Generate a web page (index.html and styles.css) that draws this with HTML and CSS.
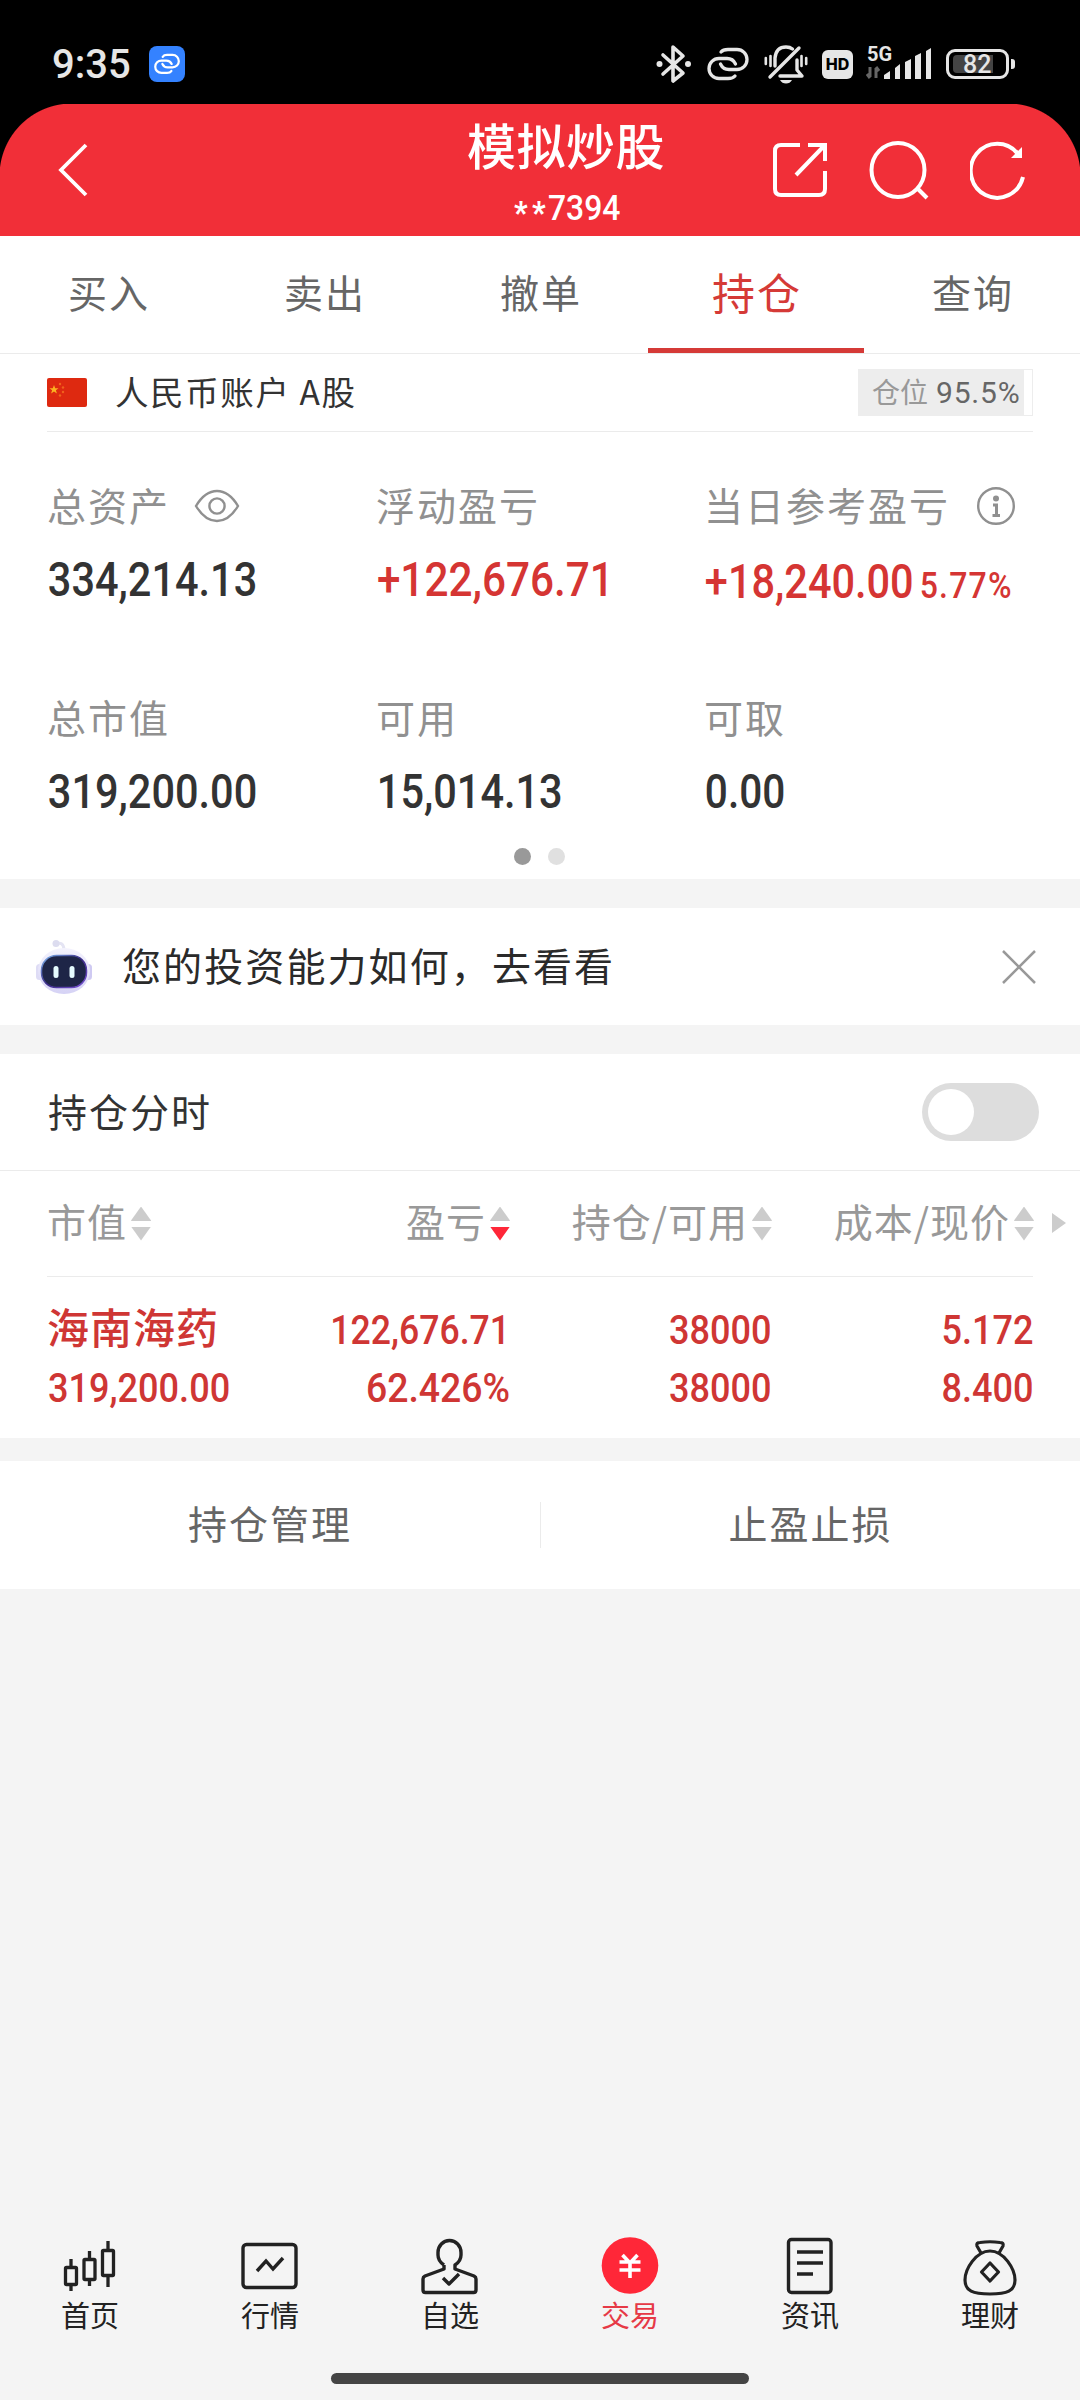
FILE: index.html
```html
<!DOCTYPE html>
<html lang="zh-CN">
<head>
<meta charset="utf-8">
<title>模拟炒股</title>
<link rel="stylesheet" href="styles.css">
</head>
<body>
<div class="screen">
  <div class="status">
    <span class="time">9:35</span>
    <svg class="app-link" width="36" height="36" viewBox="0 0 36 36"><rect width="36" height="36" rx="8" fill="#3482ff"/><g transform="translate(5 8) scale(.62)" fill="none" stroke="#fff" stroke-width="3.600" stroke-linecap="round"><path d="M28.500 16Q26 10.500 20 10.500H12a10 10 0 0 0 0 20H21Q26 30.500 28 27.500"/><path d="M13.500 16Q16 21.500 22 21.500H30a10 10 0 0 0 0-20H21Q16 1.500 14 4.500"/></g></svg>
    <div class="status-icons">
      <svg width="36" height="40" viewBox="0 0 36 40"><g fill="none" stroke="#e6e6e6" stroke-width="3.6" stroke-linejoin="round" stroke-linecap="round"><path d="M7 11 27 29 17 37V3L27 12 7 30"/></g><circle cx="3.500" cy="20" r="3" fill="#e6e6e6"/><circle cx="32" cy="20" r="3" fill="#e6e6e6"/></svg>
      <svg class="i-link" width="42" height="34" viewBox="0 -1 42 34"><g fill="none" stroke="#e6e6e6" stroke-width="3.300" stroke-linecap="round"><path d="M28.500 16Q26 10.500 20 10.500H12a10 10 0 0 0 0 20H21Q26 30.500 28 28"/><path d="M13.500 16Q16 21.500 22 21.500H30a10 10 0 0 0 0-20H21Q16 1.500 14 4"/></g></svg>
      <svg class="i-bell" width="44" height="40" viewBox="0 0 44 40"><g fill="none" stroke="#e6e6e6" stroke-width="3.400" stroke-linecap="round" stroke-linejoin="round"><path d="M6 33 35 4M11 22V14Q12 3 22 3Q26 3 28.500 5M16 32H38L33 26V16"/><path d="M1.800 14v6M6.500 12v10M37.500 12v10M42.200 14v6" stroke-width="2.600"/></g><path d="M16 36H28Q26 39.500 22 39.500T16 36Z" fill="#e6e6e6"/></svg>
      <span class="hd">HD</span>
      <svg class="i-signal" width="66" height="42" viewBox="0 -8 66 42"><g fill="#e6e6e6"><path d="M18 34v-4l6-4v8ZM29 34V23l5-4v15ZM39 34V17l6-3v20ZM49 34V11l6-3v26ZM60 34V6l5-3v31Z"/></g><path d="M4 22v10M4 33 1 29M10 33V23M10 22l3 4" stroke="#666" stroke-width="3" fill="none"/><text x="1" y="16" class="net">5G</text></svg>
      <span class="battery"><span class="battery-text">82</span></span>
    </div>
  </div>

  <header class="header">
    <svg class="back" width="32" height="54" viewBox="0 0 32 54"><path d="M29 2 4 27 29 52" fill="none" stroke="#fff" stroke-width="3.800"/></svg>
    <div class="heading"><h1>模拟炒股</h1><div class="acct num"><b>*</b><b>*</b>7394</div></div>
    <div class="actions">
      <svg width="54" height="56" viewBox="0 0 54 56"><g fill="none" stroke="#fff" stroke-width="4"><path d="M27 3H8Q2 3 2 9V47Q2 53 8 53H46Q52 53 52 47V29"/><path d="M35 3H52V19M51 4 23 33"/></g></svg>
      <svg class="search" width="60" height="60" viewBox="0 0 60 60"><g fill="none" stroke="#fff" stroke-width="4"><ellipse cx="29" cy="30" rx="26.500" ry="27"/><path d="M48 48 58 58"/></g></svg>
      <svg width="56" height="60" viewBox="0 0 56 60"><path d="M53 37A26.500 27 0 1 1 48 14" fill="none" stroke="#fff" stroke-width="4"/><path d="M52 7V18H41Z" fill="#fff"/></svg>
    </div>
  </header>

  <nav class="tabs"><span>买入</span><span>卖出</span><span>撤单</span><span class="on">持仓</span><span>查询</span></nav>

  <section class="panel">
    <div class="account">
      <svg class="flag" width="40" height="29" viewBox="0 0 40 29"><rect width="40" height="29" rx="2" fill="#de2910"/><path d="m7 7 1.200 3.200h3.300l-2.600 2 1 3.300L7 13.600l-2.900 1.900 1-3.300-2.600-2h3.300Z" fill="#fbb321"/><g fill="#f0611d"><circle cx="13" cy="6" r="1.200"/><circle cx="16" cy="9.500" r="1.200"/><circle cx="16" cy="14" r="1.200"/><circle cx="13" cy="17.500" r="1.200"/></g></svg>
      <span class="account-name">人民币账户 A股</span>
      <div class="position"><div class="position-fill" style="width:95.5%"><span>仓位</span><em class="num">95.5%</em></div></div>
    </div>
    <div class="stats">
      <div><div class="label">总资产<svg class="eye" width="46" height="34" viewBox="0 0 46 34"><g fill="none" stroke="#909090" stroke-width="2.400"><path d="M2 17Q11 2 23 2T44 17Q35 32 23 32T2 17Z"/><circle cx="23" cy="17" r="7.600"/></g></svg></div><div class="value num">334,214.13</div></div>
      <div><div class="label">浮动盈亏</div><div class="value num up wide">+122,676.71</div></div>
      <div><div class="label">当日参考盈亏<svg class="info" width="40" height="40" viewBox="0 0 40 40"><circle cx="20" cy="20" r="17.800" fill="none" stroke="#909090" stroke-width="2.400"/><circle cx="20" cy="12.500" r="3" fill="#909090"/><path d="M17 19H20.500V29M16.500 29.500H24" fill="none" stroke="#909090" stroke-width="3"/></svg></div><div class="value today"><span class="num up">+18,240.00</span><span class="num up pct">5.77%</span></div></div>
      <div><div class="label">总市值</div><div class="value num">319,200.00</div></div>
      <div><div class="label">可用</div><div class="value num">15,014.13</div></div>
      <div><div class="label">可取</div><div class="value num short">0.00</div></div>
    </div>
    <div class="dots"><i class="current"></i><i></i></div>
  </section>

  <section class="promo">
    <svg class="robot" width="58" height="56" viewBox="0 0 58 56"><defs><linearGradient id="shell" x1="0" y1="0" x2="0" y2="1"><stop offset="0" stop-color="#f4f3fd"/><stop offset="1" stop-color="#d5d2f5"/></linearGradient><linearGradient id="rim" x1="0" y1="0" x2="1" y2="1"><stop offset="0" stop-color="#7fb6ee"/><stop offset=".5" stop-color="#3a2a86"/><stop offset="1" stop-color="#7b55d8"/></linearGradient></defs><path d="M21 5Q28 2 29 10" fill="none" stroke="#e4e4f3" stroke-width="3"/><circle cx="21" cy="4.500" r="3.500" fill="#dcdcef"/><rect x="1" y="25" width="7" height="16" rx="3.500" fill="#dedcf5"/><rect x="50" y="25" width="7" height="16" rx="3.500" fill="#cfcaf2"/><ellipse cx="29" cy="32" rx="26" ry="23" fill="url(#shell)"/><rect x="6.500" y="16.500" width="45" height="32" rx="15" fill="#1e2547" stroke="url(#rim)" stroke-width="1.500"/><rect x="18.500" y="27" width="5" height="12" rx="2.500" fill="#e5fbff"/><rect x="34.500" y="27" width="5" height="12" rx="2.500" fill="#e5fbff"/></svg>
    <span class="promo-text">您的投资能力如何，去看看</span>
    <svg class="close" width="34" height="34" viewBox="0 0 34 34"><path d="M1 1 33 33M33 1 1 33" stroke="#999" stroke-width="2.500"/></svg>
  </section>

  <section class="holdings">
    <div class="intraday"><span>持仓分时</span><span class="toggle"></span></div>
    <div class="grid head">
      <span>市值<i class="sort"></i></span><span>盈亏<i class="sort desc"></i></span><span>持仓/可用<i class="sort"></i></span><span>成本/现价<i class="sort"></i></span><i class="more"></i>
    </div>
    <div class="grid row">
      <div><span class="stock">海南海药</span><span class="num">319,200.00</span></div>
      <div><span class="num profit">122,676.71</span><span class="num ratio">62.426%</span></div>
      <div><span class="num">38000</span><span class="num">38000</span></div>
      <div><span class="num">5.172</span><span class="num">8.400</span></div>
    </div>
  </section>

  <section class="manage"><span>持仓管理</span><span>止盈止损</span></section>

  <nav class="bottom">
    <a><svg width="60" height="60" viewBox="0 0 60 60"><g fill="none" stroke="#222" stroke-width="3.300"><rect x="5.500" y="30.500" width="11" height="17" rx="1"/><path d="M11 22v8M11 48v6"/><rect x="24" y="22.500" width="11" height="20" rx="1"/><path d="M29.500 14v8M29.500 43v6"/><rect x="42.500" y="13.500" width="11" height="25" rx="1"/><path d="M48 4v9M48 39v11"/></g></svg>首页</a>
    <a><svg width="60" height="60" viewBox="0 0 60 60"><g fill="none" stroke="#222" stroke-width="3.400"><rect x="3" y="7.500" width="53" height="43" rx="3.500"/><path d="M17 34 26 24 33 32 43 21"/></g></svg>行情</a>
    <a><svg width="60" height="60" viewBox="0 0 60 60"><g fill="none" stroke="#222" stroke-width="3.400" stroke-linejoin="round"><path d="M24 28V32L5 39Q3 40 3 42V53Q3 55.500 5.500 55.500H53.500Q56 55.500 56 53V42Q56 40 54 39L35 32V28Q41 24 41 18V15.500a11.500 12 0 0 0-23 0V18Q18 24 24 28"/><path d="M23 41 29 47 39 37"/></g></svg>自选</a>
    <a class="on"><svg width="60" height="60" viewBox="0 0 60 60"><circle cx="30" cy="28.500" r="28.300" fill="#ff2738"/><path d="M22.500 18 30 26 37.500 18M19.500 25H40.500M19.500 33H40.500M30 26V41" fill="none" stroke="#fff" stroke-width="3.600"/></svg>交易</a>
    <a><svg width="60" height="60" viewBox="0 0 60 60"><g fill="none" stroke="#222" stroke-width="3.400"><rect x="8.500" y="2.500" width="42.500" height="53" rx="3"/><path d="M17 15H43M17 26H43M17 37H33"/></g></svg>资讯</a>
    <a><svg width="60" height="60" viewBox="0 0 60 60"><g fill="none" stroke="#222" stroke-width="3.200" stroke-linejoin="round"><path d="M21 16 17 9Q16 5.500 20 5.500Q30 4 40 5.500Q44 5.500 43 9L39 16"/><path d="M30 14C16 14 5 32 5 43C5 54 13 57 30 57S55 54 55 43C55 32 44 14 30 14Z"/><path d="m30 26 8.500 9-8.500 9-8.500-9Z"/></g></svg>理财</a>
  </nav>
  <div class="home-bar"></div>
</div>
</body>
</html>
```
FILE: styles.css
```css
* { box-sizing: border-box; }
body {
  margin: 0;
  background: #000;
  color: #333;
  font-family: "Noto Sans CJK SC", sans-serif;
}
svg { display: block; flex: none; }
i, em { font-style: normal; }
.screen {
  width: 1080px;
  height: 2400px;
  display: flex;
  flex-direction: column;
  background: #f4f4f4;
  overflow: hidden;
}
.num {
  font-family: Roboto, sans-serif;
  font-weight: 500;
  white-space: nowrap;
}

/* status bar */
.status {
  height: 104px;
  flex: none;
  display: flex;
  align-items: center;
  padding: 24px 65px 0 52px;
  background: #000;
  color: #e6e6e6;
}
.time {
  width: 97px;
  font: 500 40px/40px Roboto, sans-serif;
  padding-top: 2px;
}
.status-icons { margin-left: auto; display: flex; align-items: center; }
.i-link { margin-left: 15px; }
.i-bell { margin-left: 15px; }
.hd {
  width: 31px;
  height: 29px;
  margin-left: 14px;
  border-radius: 6px;
  background: #e6e6e6;
  color: #000;
  font: 800 16px/29px Inter, sans-serif;
  text-align: center;
}
.i-signal { margin-left: 13px; margin-top: -12px; }
.net { font: 700 20px Roboto, sans-serif; fill: #e6e6e6; }
.battery {
  position: relative;
  width: 63px;
  height: 30px;
  margin: 0 6px 0 14px;
  border: 3px solid #e6e6e6;
  border-radius: 9px;
  padding: 3px 4px;
}
.battery::after {
  content: "";
  position: absolute;
  left: 62px;
  top: 7px;
  width: 4px;
  height: 10px;
  border-radius: 0 3px 3px 0;
  background: #e6e6e6;
}
.battery-text {
  display: block;
  width: 40px;
  height: 18px;
  padding-left: 10px;
  border-radius: 4px 0 0 4px;
  background: #444;
  font: 500 25px/20px Roboto, sans-serif;
}

/* title bar */
.header {
  height: 132px;
  flex: none;
  display: grid;
  grid-template-columns: 381px 370px 1fr;
  background: radial-gradient(circle at 72px 72px, #f12f38 72px, #000 73px) 0 0 / 72px 72px no-repeat,
    radial-gradient(circle at 0 72px, #f12f38 72px, #000 73px) 100% 0 / 72px 72px no-repeat,
    linear-gradient(#f12f38, #f12f38) 50% 0 / 936px 100% no-repeat,
    linear-gradient(#000, #f12f38 0) 0 72px no-repeat;
  color: #fff;
}
.back { margin: 39px 0 0 57px; }
.heading { text-align: center; }
h1 {
  margin: 12px 0 0;
  font-size: 49px;
  line-height: 56px;
  font-weight: 500;
  letter-spacing: .5px;
}
.acct {
  height: 36px;
  margin-top: 19px;
  font-size: 35px;
  line-height: 36px;
  transform: scaleX(.91);
}
.acct b {
  display: inline-block;
  width: 20px;
  height: 30px;
  font: 900 32px/42px Roboto, sans-serif;
  vertical-align: top;
}
.actions { display: flex; align-items: center; height: 132px; padding-left: 22px; }
.actions .search { margin: 0 41px 0 42px; }

/* trade tabs */
.tabs {
  height: 118px;
  flex: none;
  display: grid;
  grid-template-columns: repeat(5, 216px);
  border-bottom: 1px solid #ebebeb;
  background: #fff;
  color: #666;
  font-size: 39px;
  line-height: 111px;
  letter-spacing: 2px;
  text-align: center;
}
.tabs span { padding-left: 2px; }
.tabs .on {
  border-bottom: 5px solid #d53a37;
  color: #d53a37;
  font-size: 43px;
}

/* account summary */
.panel { height: 525px; flex: none; background: #fff; }
.account {
  height: 78px;
  margin: 0 47px;
  display: flex;
  align-items: center;
  border-bottom: 1px solid #ebebeb;
}
.account-name { margin: -4px 0 0 28px; font-size: 33.5px; line-height: 48px; letter-spacing: 1.6px; }
.position { width: 175px; height: 47px; margin-left: auto; border: 1px solid #ededed; }
.position-fill {
  height: 45px;
  display: flex;
  align-items: center;
  padding-left: 13px;
  background: #ededed;
  color: #999;
  font-size: 28px;
  line-height: 40px;
}
.position-fill span { margin-top: -3px; white-space: nowrap; }
.position-fill em { margin-left: 8px; color: #666; font-size: 30px; font-weight: 400; letter-spacing: .8px; }
.stats {
  display: grid;
  grid-template-columns: 329px 328px 1fr;
  row-gap: 93px;
  padding: 52px 0 0 47px;
}
.label {
  height: 40px;
  margin-bottom: 32px;
  display: flex;
  align-items: center;
  color: #909090;
  font-size: 39px;
  line-height: 38px;
  letter-spacing: 2px;
}
.eye { margin: 4px 0 0 24px; }
.info { margin: 4px 0 0 26px; }
.value {
  height: 47px;
  padding-left: 1px;
  font-size: 48px;
  line-height: 48px;
  transform: scaleX(.864);
  transform-origin: 0 50%;
}
.value.wide { transform: scaleX(.881); }
.value.short { transform: scaleX(.845); }
.today { display: flex; align-items: baseline; padding-top: 2px; }
.pct { margin-left: 7px; font-size: 37px; letter-spacing: 1.4px; }
.up { color: #d53533; }
.dots { display: flex; justify-content: center; gap: 17px; margin: 33px 2px 0 0; }
.dots i { width: 17px; height: 17px; border-radius: 50%; background: #e0e0e0; }
.dots .current { background: #999; }

/* banner */
.promo {
  height: 117px;
  flex: none;
  display: flex;
  align-items: center;
  margin: 29px 0;
  padding: 0 44px 0 35px;
  background: #fff;
}
.promo-text { margin: -5px 0 0 29px; font-size: 39px; line-height: 56px; letter-spacing: 2.1px; color: #2a2a2a; }
.close { margin-left: auto; }

/* holdings */
.holdings { height: 384px; flex: none; background: #fff; }
.intraday {
  height: 117px;
  display: flex;
  align-items: center;
  justify-content: space-between;
  padding: 0 41px 0 48px;
  border-bottom: 1px solid #ebebeb;
  font-size: 39px;
  line-height: 56px;
  letter-spacing: 2px;
}
.intraday span:first-child { margin-top: -4px; }
.toggle {
  width: 117px;
  height: 58px;
  padding: 6px;
  border-radius: 29px;
  background: #ddd;
}
.toggle::after {
  content: "";
  display: block;
  width: 46px;
  height: 46px;
  border-radius: 50%;
  background: #fff;
}
.grid {
  display: grid;
  grid-template-columns: 213px 250px 262px 262px;
  margin-left: 47px;
}
.head {
  height: 106px;
  width: 986px;
  border-bottom: 1px solid #ebebeb;
  color: #999;
  font-size: 39px;
  line-height: 56px;
  letter-spacing: 1px;
  position: relative;
}
.head span {
  display: flex;
  align-items: center;
  justify-content: flex-end;
  margin-top: -7px;
  white-space: nowrap;
}
.head span:first-child { justify-content: flex-start; }
.sort {
  width: 20px;
  height: 34px;
  margin: 7px 0 0 4px;
  background: linear-gradient(#ccc, #ccc) top / 100% 14px no-repeat, linear-gradient(#ccc, #ccc) bottom / 100% 14px no-repeat;
  clip-path: polygon(50% 0, 100% 14px, 100% 20px, 50% 100%, 0 20px, 0 14px);
}
.sort.desc { background: linear-gradient(#ccc, #ccc) top / 100% 14px no-repeat, linear-gradient(#ff2738, #ff2738) bottom / 100% 14px no-repeat; }
.more {
  position: absolute;
  right: -33px;
  top: 42px;
  width: 14px;
  height: 20px;
  background: #ccc;
  clip-path: polygon(0 0, 100% 50%, 0 100%);
}
.row { padding-top: 24px; color: #cf3634; font-size: 41px; line-height: 58px; }
.row div { display: flex; flex-direction: column; align-items: flex-end; }
.row div:first-child { align-items: flex-start; }
.row .num { height: 58px; transform: scaleX(.88); transform-origin: 100% 50%; }
.row div:first-child .num { margin-left: 1px; transform-origin: 0 50%; }
.row .profit { transform: scaleX(.868); }
.row .ratio { transform: scaleX(.912); }
.stock { height: 58px; font-size: 42px; font-weight: 500; letter-spacing: 1px; line-height: 50px; white-space: nowrap; }

/* management links */
.manage {
  height: 128px;
  flex: none;
  display: grid;
  grid-template-columns: 1fr 1fr;
  align-items: center;
  margin-top: 23px;
  background: #fff;
  color: #666;
  font-size: 39px;
  letter-spacing: 2px;
  text-align: center;
}
.manage span { height: 46px; line-height: 40px; }
.manage span + span { border-left: 1px solid #ebebeb; }

/* bottom navigation */
.bottom {
  margin-top: auto;
  height: 100px;
  display: grid;
  grid-template-columns: repeat(6, 180px);
  color: #222;
  font-size: 29px;
  line-height: 40px;
}
.bottom a { display: flex; flex-direction: column; align-items: center; }
.bottom svg { margin-bottom: -3px; }
.bottom .on { color: #e63946; }
.home-bar {
  width: 418px;
  height: 11px;
  flex: none;
  margin: 36px auto 16px;
  border-radius: 6px;
  background: #444;
}
```
